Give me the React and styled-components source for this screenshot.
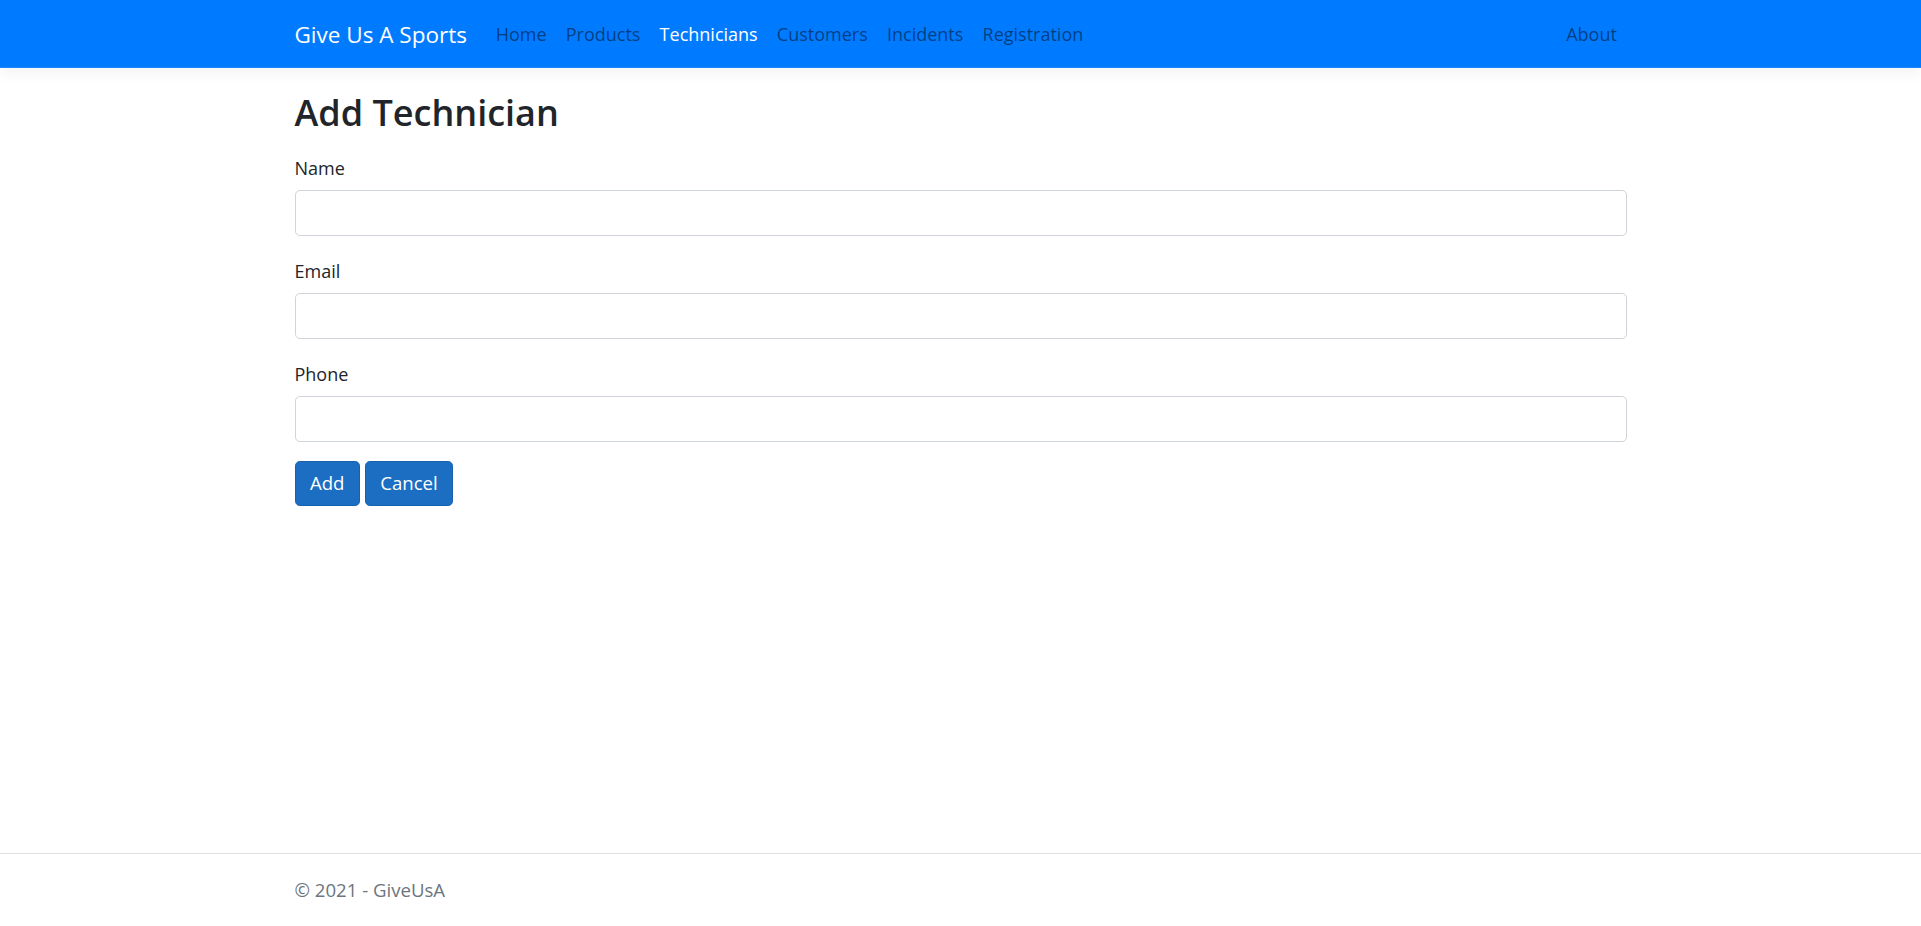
import React from 'react';
import styled, { createGlobalStyle } from 'styled-components';

// page is a 1.2x scaled bootstrap layout, so sizes are base * 1.2
// Open Sans runs wider than the original face, so font sizes are a bit smaller
const GlobalStyle = createGlobalStyle`
  html, body, #root {
    height: 100%;
  }
  body {
    margin: 0;
    font-family: "Open Sans", "Noto Sans", sans-serif;
    font-size: 18px;
    line-height: 28.8px;
    color: #212529;
    background: #fff;
  }
  * {
    box-sizing: border-box;
  }
`;

const Page = styled.div`
  display: flex;
  flex-direction: column;
  min-height: 100%;
`;

const Container = styled.div`
  width: 1368px;
  margin: 0 auto;
  padding: 0 18px;
`;

const NavBar = styled.header`
  background: #007bff;
  border-bottom: 1px solid #1f86ff;
  box-shadow: 0 5px 14px rgba(0, 0, 0, 0.05);
  padding: 9.6px 0;
  margin-bottom: 19.2px;
`;

const NavInner = styled(Container)`
  display: flex;
  align-items: center;
`;

const Brand = styled.a`
  font-size: 22.5px;
  line-height: 36px;
  padding: 7.5px 0 4.5px;
  margin-right: 19.2px;
  color: #fff;
  text-decoration: none;
  white-space: nowrap;
`;

const NavList = styled.ul`
  display: flex;
  list-style: none;
  margin: 0;
  padding: 0;
  flex-grow: ${({ grow }) => (grow ? 1 : 0)};
`;

const NavLink = styled.a`
  display: block;
  padding: 10.8px 9.6px 8.4px;
  color: ${({ active }) => (active ? '#fff' : 'rgba(0, 0, 0, 0.5)')};
  text-decoration: none;
`;

const Main = styled.main`
  flex: 1;
  padding-bottom: 19.2px;
`;

const Title = styled.h2`
  font-size: 36px;
  font-weight: 600;
  line-height: 46px;
  padding-top: 2.4px;
  margin: 0 0 16px;
`;

const FormGroup = styled.div`
  margin-bottom: 19.2px;
`;

const Label = styled.label`
  display: inline-block;
  padding-top: 2.4px;
  margin-bottom: 7.2px;
`;

const Input = styled.input`
  display: block;
  width: 100%;
  height: 45.6px;
  padding: 7.2px 14.4px;
  font: inherit;
  color: #495057;
  background: #fff;
  border: 1.2px solid #ced4da;
  border-radius: 4.8px;
`;

const Actions = styled.div`
  display: flex;
  gap: 5px;
`;

const Button = styled.button`
  font: inherit;
  font-size: 18.6px;
  line-height: 28.8px;
  padding: 7.2px 14.4px;
  color: #fff;
  background: #1b6ec2;
  border: 1.2px solid #1861ac;
  border-radius: 4.8px;
  cursor: pointer;
`;

const Footer = styled.footer`
  border-top: 1.2px solid #dee2e6;
  font-size: 18.6px;
  line-height: 72px;
  color: #6c757d;
  white-space: nowrap;
`;

const links = ['Home', 'Products', 'Technicians', 'Customers', 'Incidents', 'Registration'];
const fields = ['Name', 'Email', 'Phone'];

const App = () => {
  return (
    <Page>
      <GlobalStyle />
      <NavBar>
        <NavInner>
          <Brand href='#'>Give Us A Sports</Brand>
          <NavList grow>
            {links.map((link) => (
              <li key={link}>
                <NavLink href='#' active={link === 'Technicians'}>
                  {link}
                </NavLink>
              </li>
            ))}
          </NavList>
          <NavList>
            <li>
              <NavLink href='#'>About</NavLink>
            </li>
          </NavList>
        </NavInner>
      </NavBar>
      <Main>
        <Container>
          <Title>Add Technician</Title>
          <form onSubmit={(e) => e.preventDefault()}>
            {fields.map((field) => (
              <FormGroup key={field}>
                <Label htmlFor={field}>{field}</Label>
                <Input id={field} type='text' />
              </FormGroup>
            ))}
            <Actions>
              <Button type='submit'>Add</Button>
              <Button type='button'>Cancel</Button>
            </Actions>
          </form>
        </Container>
      </Main>
      <Footer>
        <Container>© 2021 - GiveUsA</Container>
      </Footer>
    </Page>
  );
};

export default App;
